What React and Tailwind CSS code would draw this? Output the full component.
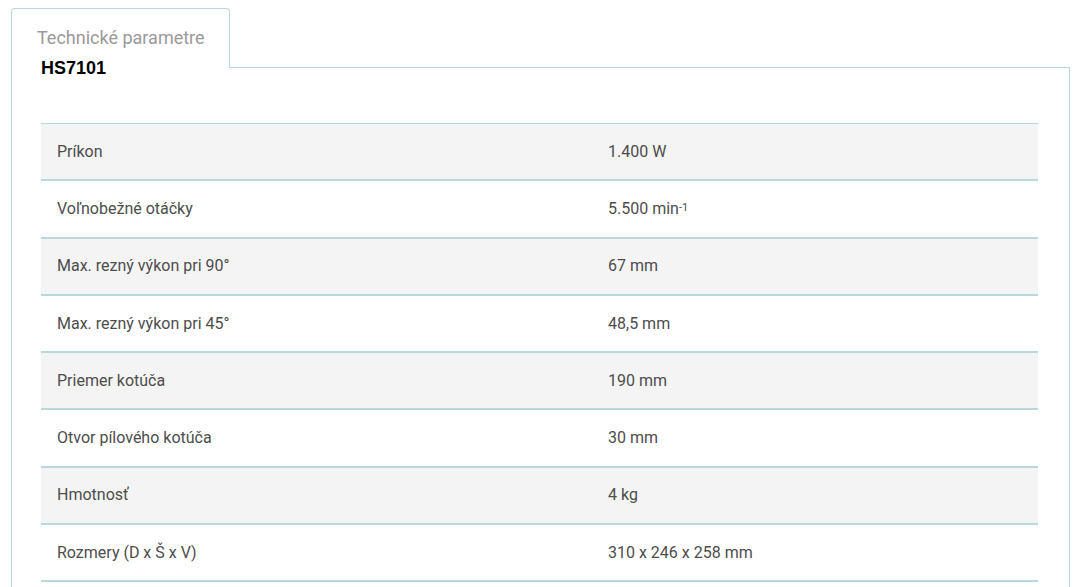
import React from 'react'

const rows = [
  ['Príkon', '1.400 W'],
  ['Voľnobežné otáčky', <>5.500 min<sup className="text-[11px] relative -top-[3px] text-[#4d4d4d]">-1</sup></>],
  ['Max. rezný výkon pri 90°', '67 mm'],
  ['Max. rezný výkon pri 45°', '48,5 mm'],
  ['Priemer kotúča', '190 mm'],
  ['Otvor pílového kotúča', '30 mm'],
  ['Hmotnosť', '4 kg'],
  ['Rozmery (D x Š x V)', '310 x 246 x 258 mm'],
]

export default function App() {
  return (
    <div className="min-h-[587px] bg-white pt-[8px] pl-[11px] pr-[8px] font-['Roboto',sans-serif]">
      {/* Tab */}
      <div className="relative z-10 -mb-px w-[219px] h-[60px] rounded-t-[4px] border border-b-0 border-[#b9d8dd] bg-white">
        <div className="pl-[25px] pt-[17px] text-[18px] leading-[24px] text-[#9a9a9a]">Technické parametre</div>
      </div>

      {/* Panel */}
      <div className="border border-[#b9d8dd] pl-[29px] pr-[31px] pb-[40px]">
        <h2 className="relative z-20 -mt-[10px] font-['Liberation_Sans',Arial,sans-serif] text-[18px] font-bold leading-[21px] text-black">
          HS7101
        </h2>

        <div className="mt-[44px] border-t border-[#b9d8dd]">
          {rows.map(([label, value], i) => (
            <div
              key={i}
              className={`grid grid-cols-[551px_1fr] h-[57.3px] items-center border-b-2 border-[#b9d8dd] text-[16px] text-[#4d4d4d] ${i % 2 === 0 ? 'bg-[#f4f4f4]' : 'bg-white'}`}
            >
              <div className="pl-[16px]">{label}</div>
              <div className="pl-[16px]">{value}</div>
            </div>
          ))}
        </div>
      </div>
    </div>
  )
}
